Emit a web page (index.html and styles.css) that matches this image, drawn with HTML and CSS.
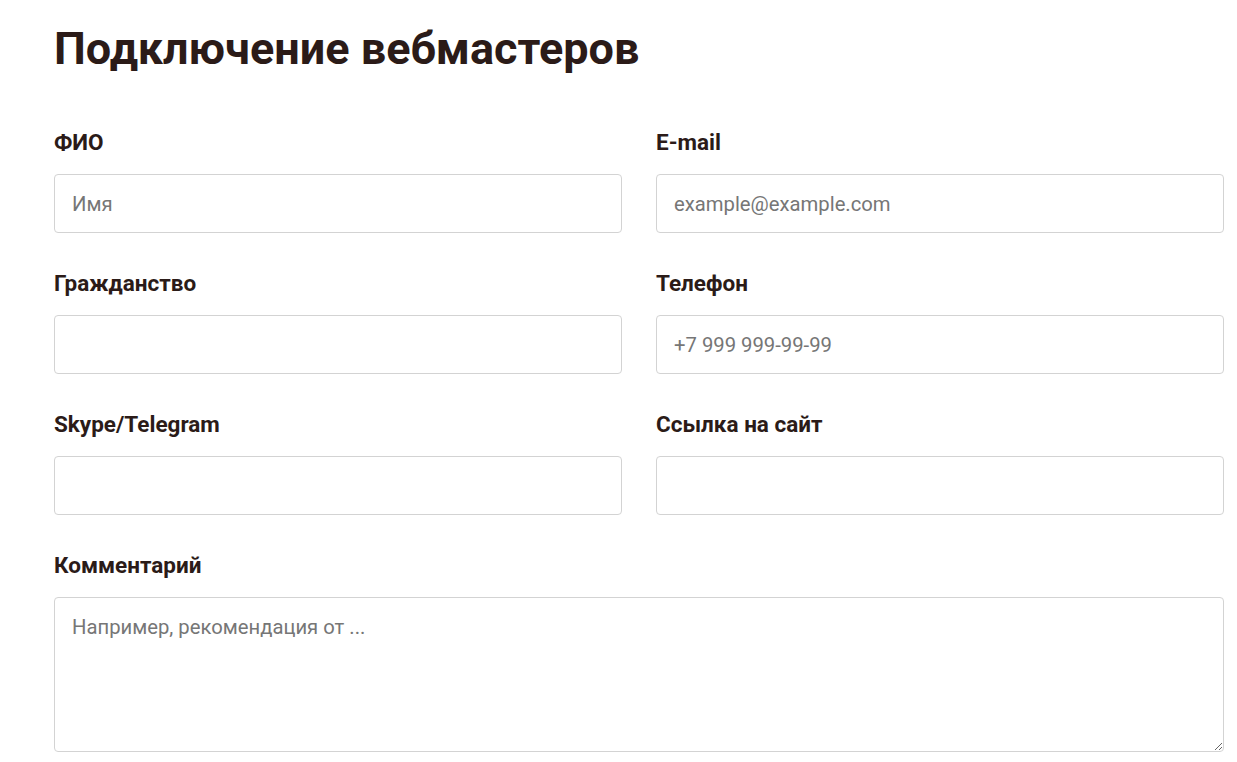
FILE: index.html
```html
<!DOCTYPE html>
<html lang="ru">
<head>
<meta charset="utf-8">
<title>Подключение вебмастеров</title>
<link rel="stylesheet" href="styles.css">
</head>
<body>
<div class="container">
  <h1 class="title">Подключение вебмастеров</h1>
  <form class="form">
    <div class="grid">
      <div class="field">
        <label class="label" for="fio">ФИО</label>
        <input class="input" id="fio" type="text" placeholder="Имя">
      </div>
      <div class="field">
        <label class="label" for="email">E-mail</label>
        <input class="input" id="email" type="text" placeholder="example@example.com">
      </div>
      <div class="field">
        <label class="label" for="cit">Гражданство</label>
        <input class="input" id="cit" type="text">
      </div>
      <div class="field">
        <label class="label" for="tel">Телефон</label>
        <input class="input" id="tel" type="text" placeholder="+7 999 999-99-99">
      </div>
      <div class="field">
        <label class="label" for="sk">Skype/Telegram</label>
        <input class="input" id="sk" type="text">
      </div>
      <div class="field">
        <label class="label" for="site">Ссылка на сайт</label>
        <input class="input" id="site" type="text">
      </div>
      <div class="field field-wide">
        <label class="label" for="com">Комментарий</label>
        <textarea class="input textarea" id="com" placeholder="Например, рекомендация от ..."></textarea>
      </div>
    </div>
  </form>
</div>
</body>
</html>
```
FILE: styles.css
```css
* { box-sizing: border-box; }
html, body { margin: 0; padding: 0; background: #fff; }
body {
  font-family: Roboto, "Liberation Sans", Arial, sans-serif;
  color: #2b1b18;
}
.container {
  width: 1170px;
  margin-left: 54px;
  padding-top: 23px;
}
.title {
  margin: 0;
  font-size: 45px;
  line-height: 52px;
  font-weight: 700;
  color: #2b1b18;
}
.form { margin-top: 54px; }
.grid {
  display: grid;
  grid-template-columns: 1fr 1fr;
  column-gap: 34px;
  row-gap: 37px;
}
.field { display: flex; flex-direction: column; }
.field-wide { grid-column: 1 / 3; }
.label {
  font-size: 22.5px;
  line-height: 26px;
  font-weight: 700;
  margin-bottom: 19px;
  color: #2b1b18;
}
.input {
  height: 59px;
  border: 1px solid #d3d3d3;
  border-radius: 4px;
  padding: 0 17px;
  font-family: Roboto, "Liberation Sans", Arial, sans-serif;
  font-size: 20.25px;
  color: #333;
  background: #fff;
  outline: none;
}
.input::placeholder { color: #767676; }
.textarea {
  height: 155px;
  padding-top: 17px;
  resize: vertical;
}
```
